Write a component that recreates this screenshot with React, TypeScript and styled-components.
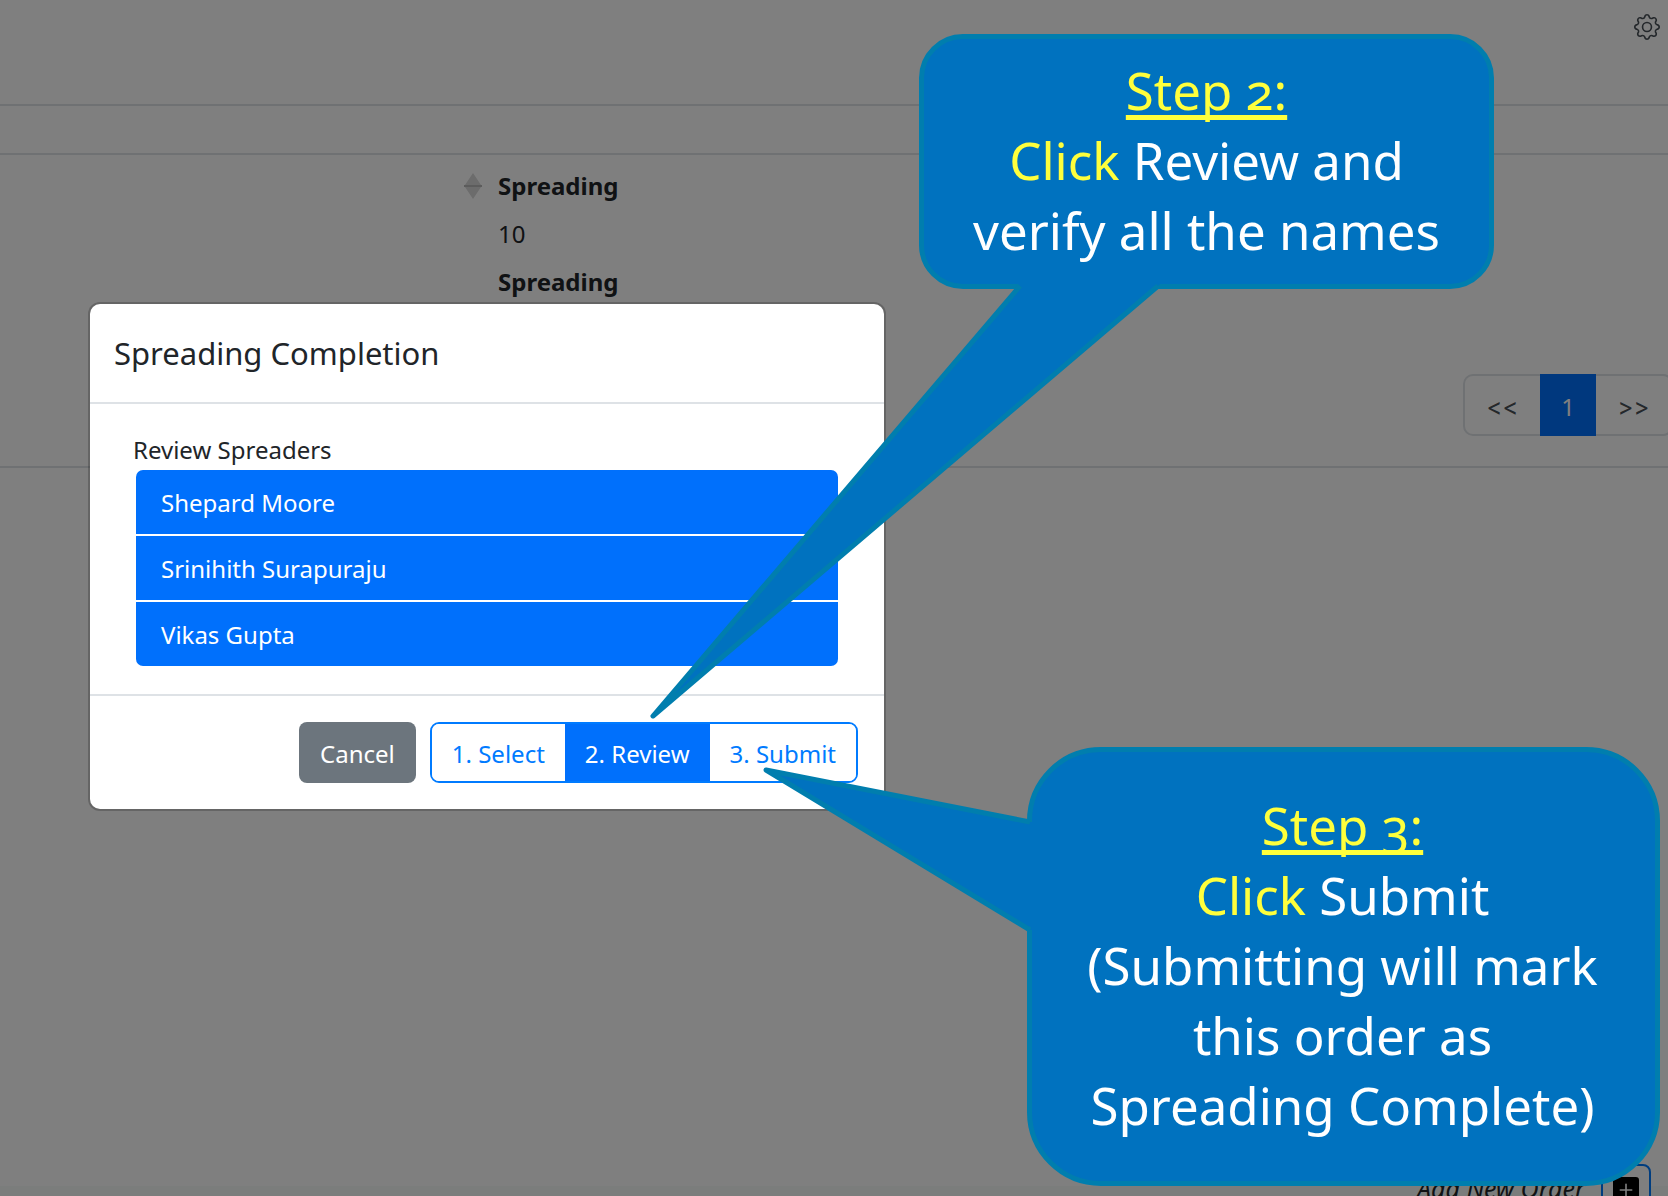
import React from "react";
import styled, { createGlobalStyle } from "styled-components";
import { BsGear, BsPlusSquareFill } from "react-icons/bs";

const font = `"Noto Sans", "Open Sans", sans-serif`;
const line = "#dee2e6";
const ink = "#212529";
const primary = "#0070fc";
const outline = "#007bff";
const bubbleFill = "#0072bf";
const bubbleEdge = "#007eae";

const GlobalStyle = createGlobalStyle`
  *, *::before, *::after { box-sizing: border-box; }
  body { margin: 0; background: #fff; color: ${ink}; font: 400 24px/36px ${font}; }
  button { font: inherit; cursor: pointer; }
`;

const Screen = styled.div`
  position: relative;
  display: flex;
  flex-direction: column;
  min-height: 100vh;
  overflow: hidden;
`;

const TopBar = styled.header`
  display: flex;
  justify-content: flex-end;
  height: 106px;
  padding: 14px 8px;
  border-bottom: 2px solid ${line};
`;

const IconButton = styled.button`
  display: flex;
  align-self: flex-start;
  padding: 0;
  border: 0;
  background: none;
  color: #495057;
`;

const FilterBar = styled.div`
  height: 49px;
  border-bottom: 2px solid ${line};
`;

const Orders = styled.section`
  padding: 7px 0 30px;
  border-bottom: 2px solid ${line};
`;

const Table = styled.table`
  width: 100%;
  table-layout: fixed;
  border-collapse: collapse;
  text-align: left;

  th, td { height: 48px; padding: 0 8px; }
  th { font-weight: 700; }
`;

const SortCell = styled.td`
  width: 490px;
`;

const SortIcon = styled.svg`
  display: block;
  margin-left: auto;
`;

const Pager = styled.nav`
  display: flex;
  justify-content: flex-end;
  margin: 68px -5px 0 0;
`;

const PageButton = styled.button<{ $active?: boolean; $edge?: "left" | "right" }>`
  height: 62px;
  width: ${p => (p.$active ? 56 : 77)}px;
  padding: 4px 0 0;
  border: 2px solid ${p => (p.$active ? primary : line)};
  border-left-width: ${p => (p.$edge === "right" ? 0 : 2)}px;
  border-right-width: ${p => (p.$edge === "left" ? 0 : 2)}px;
  border-radius: ${p => (p.$edge === "left" ? "10px 0 0 10px" : p.$edge === "right" ? "0 10px 10px 0" : "0")};
  background: ${p => (p.$active ? primary : "#fff")};
  color: ${p => (p.$active ? "#fff" : "#495057")};
  ${p => p.$edge && `font-family: Inter, ${font};`}
`;

const StatusStrip = styled.footer`
  height: 10px;
  margin-top: auto;
  background: #f6fbf8;
`;

const NewOrder = styled.div`
  position: absolute;
  right: 17px;
  bottom: -29px;
  display: flex;
  align-items: flex-start;
  gap: 16px;
  font-size: 25px;
  font-style: italic;
  line-height: 48px;
`;

const NewOrderButton = styled.button`
  display: flex;
  align-items: flex-start;
  justify-content: center;
  width: 50px;
  height: 61px;
  padding: 11px 0;
  border: 2px solid ${outline};
  border-radius: 8px;
  background: #fff;
  color: #000;
`;

const Backdrop = styled.div`
  position: absolute;
  inset: 0;
  padding: 304px 0 0 90px;
  background: rgba(0, 0, 0, 0.5);
`;

const Modal = styled.section`
  max-width: 794px;
  border-radius: 10px;
  background: #fff;
  box-shadow: 0 0 0 2px rgba(0, 0, 0, 0.2);
`;

const ModalHeader = styled.header`
  padding: 28px 24px;
  border-bottom: 2px solid ${line};
`;

const ModalTitle = styled.h1`
  margin: 0;
  font-size: 31px;
  font-weight: 400;
  line-height: 42px;
`;

const ModalBody = styled.div`
  padding: 28px 46px;
`;

const ListTitle = styled.h2`
  margin: 0 -3px;
  font-size: 24px;
  font-weight: 400;
`;

const NameList = styled.ul`
  display: flex;
  flex-direction: column;
  gap: 2px;
  margin: 2px 0 0;
  padding: 0;
  border-radius: 7px;
  overflow: hidden;
  list-style: none;
`;

const NameItem = styled.li`
  padding: 15px 25px 13px;
  background: ${primary};
  color: #fff;
`;

const ModalFooter = styled.footer`
  display: flex;
  justify-content: flex-end;
  gap: 14px;
  padding: 26px;
  border-top: 2px solid ${line};
`;

const CancelButton = styled.button`
  height: 61px;
  padding: 2px 21px 0;
  border: 0;
  border-radius: 8px;
  background: #6c757d;
  color: #fff;
`;

const Steps = styled.div`
  display: flex;
  border: 2px solid ${outline};
  border-radius: 9px;
  overflow: hidden;
`;

const StepButton = styled.button<{ $active?: boolean }>`
  padding: 2px 20px 0;
  border: 0;
  background: ${p => (p.$active ? primary : "#fff")};
  color: ${p => (p.$active ? "#fff" : outline)};
`;

const Bubble = styled.aside<{ $x: number; $y: number; $w: number; $pad: string; $radius: number }>`
  position: absolute;
  left: ${p => p.$x}px;
  top: ${p => p.$y}px;
  width: ${p => p.$w}px;
  padding: ${p => p.$pad};
  border: 5px solid ${bubbleEdge};
  border-radius: ${p => p.$radius}px;
  background: ${bubbleFill};
  color: #fff;
  font-size: 51px;
  font-weight: 450;
  line-height: 70px;
  font-variant-numeric: oldstyle-nums;
  text-align: center;
  white-space: nowrap;
`;

const Tail = styled.svg<{ $x: number; $y: number }>`
  position: absolute;
  left: ${p => p.$x}px;
  top: ${p => p.$y}px;
  pointer-events: none;
`;

const BubbleTitle = styled.div`
  color: #ffff3c;
  text-decoration: underline;
  text-decoration-thickness: 5px;
  text-underline-offset: 5px;
  text-decoration-skip-ink: none;
`;

const Accent = styled.span`
  color: #ffff3c;
`;

const spreaders = ["Shepard Moore", "Srinihith Surapuraju", "Vikas Gupta"];
const steps = ["1. Select", "2. Review", "3. Submit"];

export default function App() {
  const [step, setStep] = React.useState(1);

  return (
    <Screen>
      <GlobalStyle />
      <TopBar>
        <IconButton aria-label="Settings"><BsGear size={26} /></IconButton>
      </TopBar>
      <FilterBar />
      <Orders>
        <Table>
          <thead>
            <tr>
              <SortCell>
                <SortIcon width="18" height="26" viewBox="0 0 18 26" fill="#d8d8d8">
                  <path d="M9 0 17 12H1ZM1 14H17L9 26Z" />
                  <path d="M0 12H18V14H0Z" fill="#b8b8b8" />
                </SortIcon>
              </SortCell>
              <th scope="col">Spreading</th>
            </tr>
          </thead>
          <tbody>
            <tr><td /><td>10</td></tr>
          </tbody>
          <tfoot>
            <tr><td /><th scope="col">Spreading</th></tr>
          </tfoot>
        </Table>
        <Pager aria-label="Pages">
          <PageButton $edge="left">&lt;&lt;</PageButton>
          <PageButton $active>1</PageButton>
          <PageButton $edge="right">&gt;&gt;</PageButton>
        </Pager>
      </Orders>
      <StatusStrip />
      <NewOrder>
        <span>Add New Order</span>
        <NewOrderButton aria-label="Add new order"><BsPlusSquareFill size={26} /></NewOrderButton>
      </NewOrder>

      <Backdrop>
        <Modal role="dialog" aria-labelledby="modal-title">
          <ModalHeader>
            <ModalTitle id="modal-title">Spreading Completion</ModalTitle>
          </ModalHeader>
          <ModalBody>
            <ListTitle>Review Spreaders</ListTitle>
            <NameList>
              {spreaders.map(name => <NameItem key={name}>{name}</NameItem>)}
            </NameList>
          </ModalBody>
          <ModalFooter>
            <CancelButton>Cancel</CancelButton>
            <Steps>
              {steps.map((label, i) => (
                <StepButton key={label} $active={i === step} onClick={() => setStep(i)}>{label}</StepButton>
              ))}
            </Steps>
          </ModalFooter>
        </Modal>
      </Backdrop>

      <Bubble $x={919} $y={34} $w={575} $pad="16px 0 19px" $radius={44}>
        <Tail $x={-284} $y={241} width="540" height="450" viewBox="640 280 540 450">
          <path d="M1017 283 1020 286 653 716 1158 286 1161 283Z" fill={bubbleFill} />
          <path d="M1020 286 653 716 1158 286" fill="none" stroke={bubbleEdge} strokeWidth="5" strokeLinejoin="round" />
        </Tail>
        <BubbleTitle>Step 2:</BubbleTitle>
        <div><Accent>Click</Accent> Review and</div>
        <div>verify all the names</div>
      </Bubble>

      <Bubble $x={1027} $y={747} $w={633} $pad="38px 2px 41px 0" $radius={74}>
        <Tail $x={-272} $y={8} width="280" height="180" viewBox="760 760 280 180">
          <path d="M1034 822 1030 822 766 770 1030 930 1034 930Z" fill={bubbleFill} />
          <path d="M1030 822 766 770 1030 930" fill="none" stroke={bubbleEdge} strokeWidth="5" strokeLinejoin="round" />
        </Tail>
        <BubbleTitle>Step 3:</BubbleTitle>
        <div><Accent>Click</Accent> Submit</div>
        <div>(Submitting will mark</div>
        <div>this order as</div>
        <div>Spreading Complete)</div>
      </Bubble>
    </Screen>
  );
}
